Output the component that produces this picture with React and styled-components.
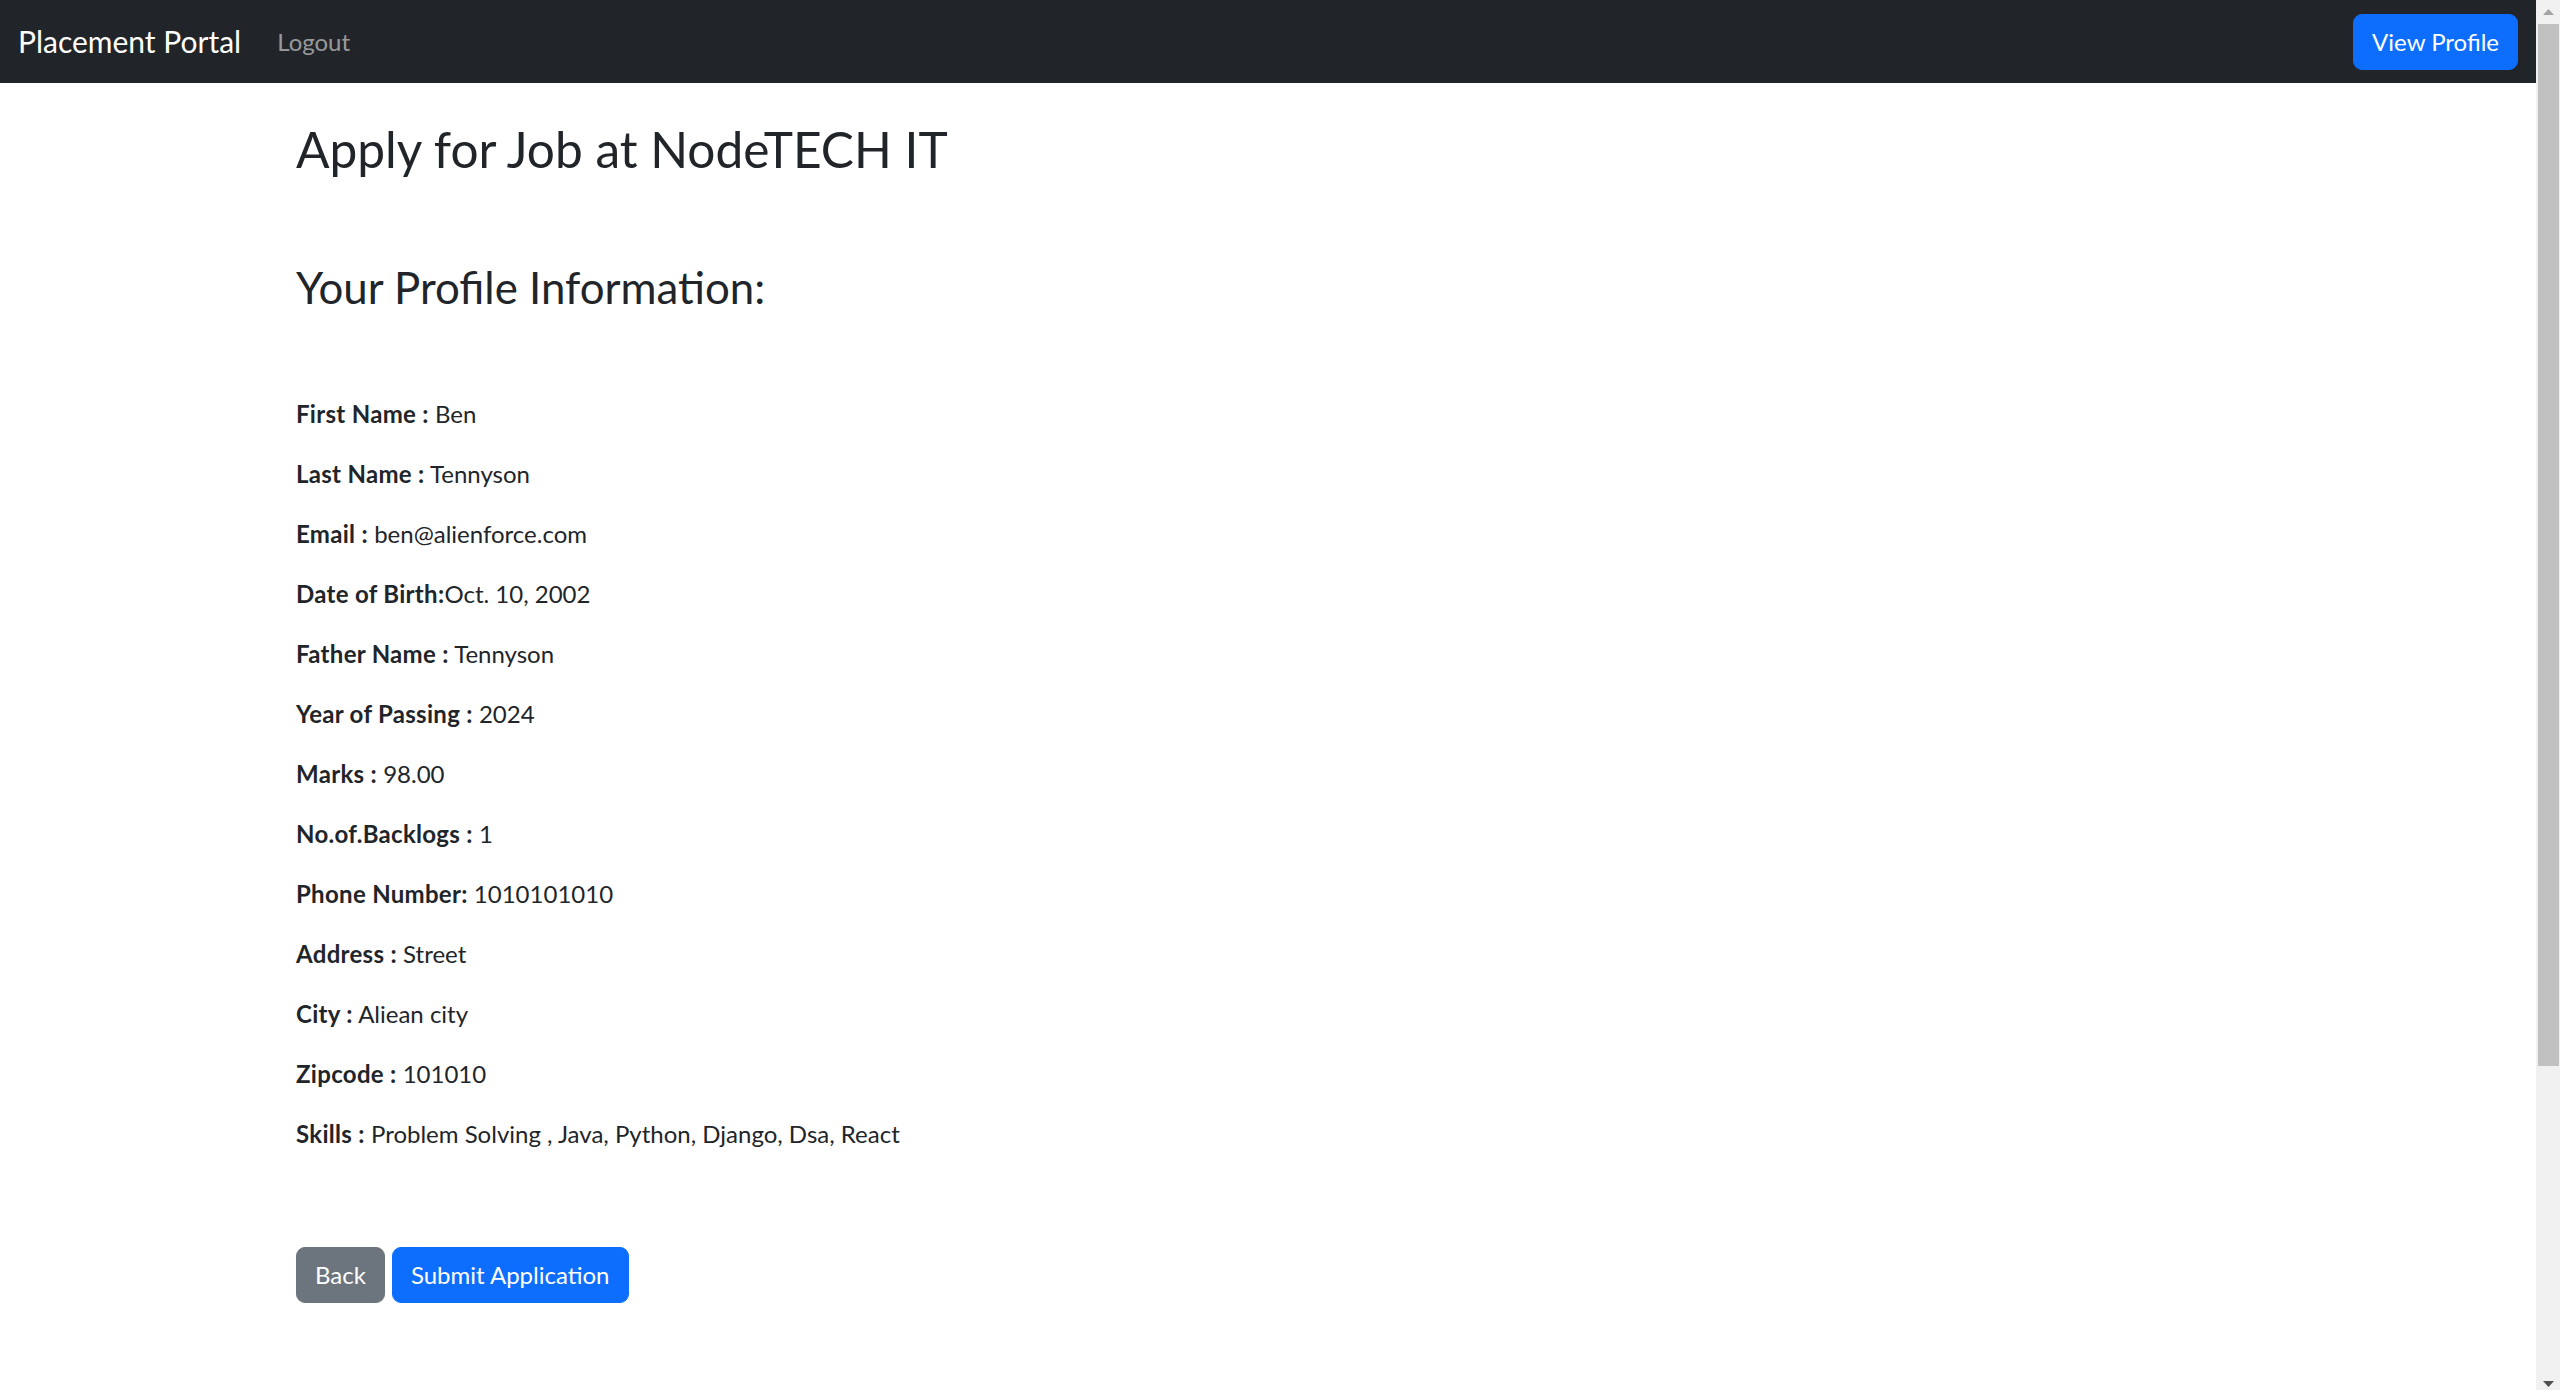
import React from "react";
import styled, { createGlobalStyle } from "styled-components";

const GlobalStyle = createGlobalStyle`
  html, body { margin: 0; padding: 0; }
  body {
    font-family: Lato, "Liberation Sans", Arial, sans-serif;
    color: #212529;
    background: #ffffff;
    overflow: hidden;
    -webkit-font-smoothing: antialiased;
  }
  *, *::before, *::after { box-sizing: border-box; }
`;

const Shell = styled.div`
  display: flex;
  height: 100vh;
  overflow: hidden;
`;

const Main = styled.div`
  flex: 1;
  min-width: 0;
`;

const ScrollTrack = styled.aside`
  flex: 0 0 24px;
  display: flex;
  flex-direction: column;
  background: #f1f1f1;
`;

const ScrollArrow = styled.div`
  flex: 0 0 24px;
  display: flex;
  justify-content: center;
  padding-top: ${(p) => (p.$down ? "15px" : "9px")};
  padding-left: 1px;
`;

const ScrollThumb = styled.div`
  flex: 0 0 1042px;
  margin: 0 1px 0 2px;
  background: #c1c1c1;
`;

const ScrollSpacer = styled.div`
  flex: 1;
`;

const Navbar = styled.nav`
  display: flex;
  align-items: center;
  justify-content: space-between;
  height: 83px;
  padding: 0 18px;
  background: #212529;
`;

const NavLeft = styled.div`
  display: flex;
  align-items: center;
`;

const Brand = styled.a`
  font-size: 30px;
  line-height: 45px;
  color: #ffffff;
  text-decoration: none;
  margin-right: 24px;
  white-space: nowrap;
`;

const NavLink = styled.a`
  font-size: 24px;
  line-height: 36px;
  padding: 0 12px;
  color: rgba(255, 255, 255, 0.55);
  text-decoration: none;
`;

const Button = styled.button`
  display: inline-block;
  font-family: inherit;
  font-size: 24px;
  line-height: 36px;
  padding: 9px 18px;
  border: 1px solid ${(p) => (p.$variant === "secondary" ? "#6c757d" : "#0d6efd")};
  border-radius: 9px;
  color: #ffffff;
  background: ${(p) => (p.$variant === "secondary" ? "#6c757d" : "#0d6efd")};
  cursor: pointer;
`;

const Container = styled.main`
  max-width: 1980px;
  margin: 0 auto;
  padding: 0 18px;
`;

const Title = styled.h1`
  font-size: 49.6px;
  line-height: 59px;
  font-weight: 400;
  margin: 37px 0 0;
`;

const SectionTitle = styled.h2`
  font-size: 43.8px;
  line-height: 52px;
  font-weight: 400;
  margin: 82px 0 0;
`;

const InfoList = styled.div`
  margin-top: 83px;
`;

const InfoRow = styled.p`
  font-size: 24px;
  line-height: 36px;
  margin: 0 0 24px;
`;

const Label = styled.strong`
  font-weight: 700;
  letter-spacing: 0.3px;
`;

const Actions = styled.div`
  display: flex;
  gap: 7px;
  margin-top: 95px;
`;

const profile = [
  ["First Name : ", "Ben"],
  ["Last Name : ", "Tennyson"],
  ["Email : ", "ben@alienforce.com"],
  ["Date of Birth:", "Oct. 10, 2002"],
  ["Father Name : ", "Tennyson"],
  ["Year of Passing : ", "2024"],
  ["Marks : ", "98.00"],
  ["No.of.Backlogs : ", "1"],
  ["Phone Number: ", "1010101010"],
  ["Address : ", "Street"],
  ["City : ", "Aliean city"],
  ["Zipcode : ", "101010"],
  ["Skills : ", "Problem Solving , Java, Python, Django, Dsa, React"],
];

const Triangle = ({ down, color }) => (
  <svg width="11" height="6" viewBox="0 0 11 6">
    <polygon points={down ? "0,0 11,0 5.5,6" : "5.5,0 11,6 0,6"} fill={color} />
  </svg>
);

export default function App() {
  return (
    <Shell>
      <GlobalStyle />
      <Main>
        <Navbar>
          <NavLeft>
            <Brand href="#">Placement Portal</Brand>
            <NavLink href="#">Logout</NavLink>
          </NavLeft>
          <Button>View Profile</Button>
        </Navbar>
        <Container>
          <Title>Apply for Job at NodeTECH IT</Title>
          <SectionTitle>Your Profile Information:</SectionTitle>
          <InfoList>
            {profile.map(([label, value]) => (
              <InfoRow key={label}>
                <Label>{label.trimEnd()}</Label>
                {label.endsWith(" ") ? " " : ""}
                {value}
              </InfoRow>
            ))}
          </InfoList>
          <Actions>
            <Button $variant="secondary">Back</Button>
            <Button>Submit Application</Button>
          </Actions>
        </Container>
      </Main>
      <ScrollTrack aria-hidden="true">
        <ScrollArrow>
          <Triangle color="#a3a3a3" />
        </ScrollArrow>
        <ScrollThumb />
        <ScrollSpacer />
        <ScrollArrow $down>
          <Triangle down color="#505050" />
        </ScrollArrow>
      </ScrollTrack>
    </Shell>
  );
}
